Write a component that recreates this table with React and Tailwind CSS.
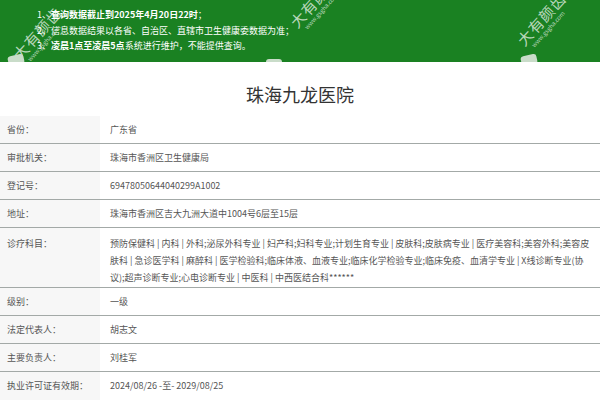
import React from "react";

const rows = [
  ["省份：", "广东省"],
  ["审批机关：", "珠海市香洲区卫生健康局"],
  ["登记号：", "694780506440402 99A1002".replace(" ", "")],
  ["地址：", "珠海市香洲区吉大九洲大道中1004号6层至15层"],
];

const rows2 = [
  ["级别：", "一级"],
  ["法定代表人：", "胡志文"],
  ["主要负责人：", "刘桂军"],
  ["执业许可证有效期：", "2024/08/26 -至- 2029/08/25"],
];

function Watermark({ className }) {
  return (
    <div className={"absolute pointer-events-none text-white/70 -rotate-[48deg] leading-none " + className}>
      <div className="text-[15px] tracking-[1px]">大有颜齿</div>
      <div className="text-[6px] mt-[2px] ml-[6px]">www.gsgha.com</div>
    </div>
  );
}

function Row({ label, value, last }) {
  return (
    <div className={"flex h-[28px] " + (last ? "" : "border-b border-[#a3a9a7]")}>
      <div className="w-[100px] shrink-0 bg-[#f7f7f7] pl-[7px] flex items-center">{label}</div>
      <div className="pl-[10px] flex items-center">{value}</div>
    </div>
  );
}

export default function App() {
  return (
    <div
      className="w-[600px] h-[400px] overflow-hidden bg-white text-[9px] text-[#555]"
      style={{ fontFamily: '"Noto Sans CJK SC", "Noto Sans", sans-serif' }}
    >
      <div className="relative h-[62px] bg-[#1a8122] pl-[37px] pt-[7px] text-white leading-[15.5px] overflow-hidden">
        <div>
          1、<span className="font-bold">查询数据截止到2025年4月20日22时</span>；
        </div>
        <div>2、信息数据结果以各省、自治区、直辖市卫生健康委数据为准；</div>
        <div>
          3、<span className="font-bold">凌晨1点至凌晨5点</span>系统进行维护，不能提供查询。
        </div>
        <Watermark className="left-[8px] top-[24px]" />
        <Watermark className="left-[285px] top-[-8px]" />
        <Watermark className="left-[512px] top-[10px]" />
        <div className="absolute left-[8px] top-[55px] w-[16px] h-[10px] rounded-[3px] bg-[#c9dcc9] -rotate-12" />
        <div className="absolute left-[266px] top-[59px] w-[16px] h-[6px] rounded-[3px] bg-[#c9dcc9]" />
        <div className="absolute left-[521px] top-[55px] w-[16px] h-[10px] rounded-[3px] bg-[#c9dcc9] -rotate-12" />
      </div>
      <div className="h-[54px] pt-[23px] text-center text-[18px] leading-[18px] text-[#333]">珠海九龙医院</div>
      {rows.map(([l, v]) => (
        <Row key={l} label={l} value={v} />
      ))}
      <div className="flex h-[60px] border-b border-[#a3a9a7] leading-[17px]">
        <div className="w-[100px] shrink-0 bg-[#f7f7f7] pl-[7px] pt-[7px]">诊疗科目：</div>
        <div className="pl-[10px] pt-[7px] whitespace-nowrap">
          <div>预防保健科 | 内科 | 外科;泌尿外科专业 | 妇产科;妇科专业;计划生育专业 | 皮肤科;皮肤病专业 | 医疗美容科;美容外科;美容皮</div>
          <div>肤科 | 急诊医学科 | 麻醉科 | 医学检验科;临床体液、血液专业;临床化学检验专业;临床免疫、血清学专业 | X线诊断专业(协</div>
          <div>议);超声诊断专业;心电诊断专业 | 中医科 | 中西医结合科******</div>
        </div>
      </div>
      {rows2.map(([l, v], i) => (
        <Row key={l} label={l} value={v} last={i === rows2.length - 1} />
      ))}
    </div>
  );
}
